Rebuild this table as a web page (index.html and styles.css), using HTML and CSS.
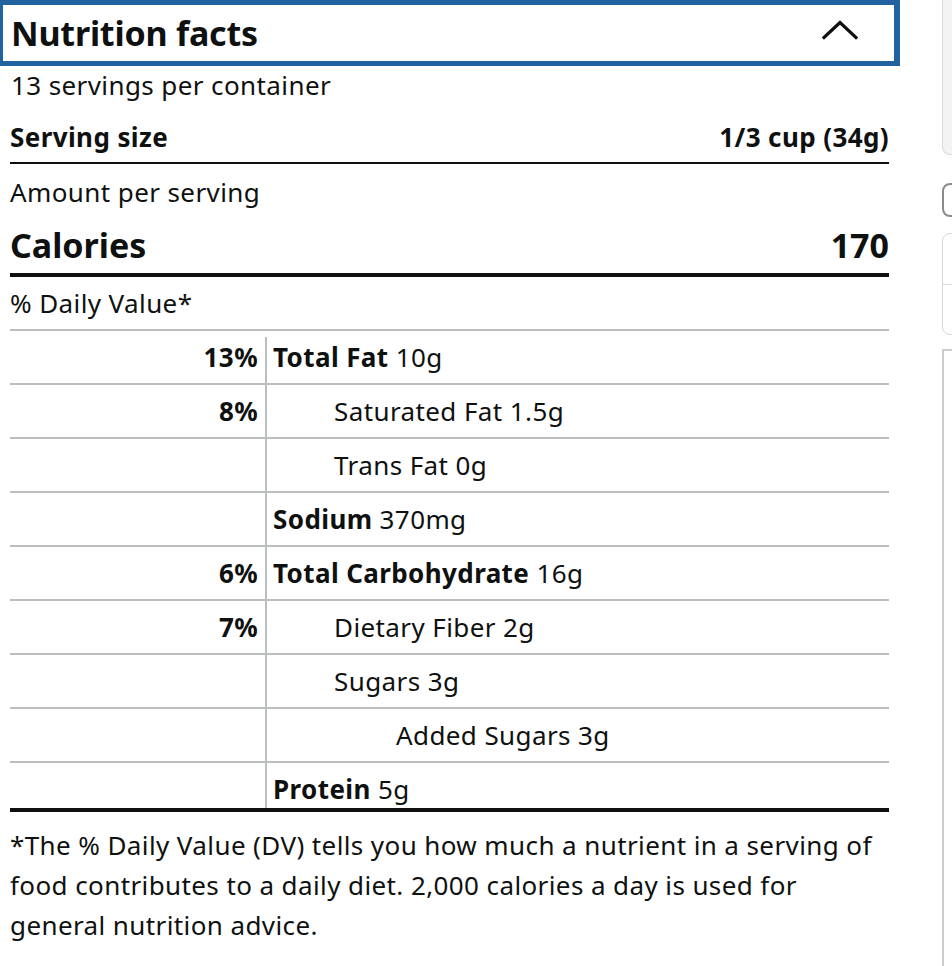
FILE: index.html
```html
<!DOCTYPE html>
<html lang="en">
<head>
<meta charset="utf-8">
<title>Nutrition facts</title>
<link rel="stylesheet" href="styles.css">
</head>
<body>
<div class="page">
  <main class="panel">
    <div class="head">
      <h2 class="title">Nutrition facts</h2>
      <svg class="chev" width="36" height="20" viewBox="0 0 36 20" aria-hidden="true">
        <path d="M2 17.5 L18 2.5 L34 17.5" fill="none" stroke="#0f1111" stroke-width="3.2" stroke-linecap="square" stroke-linejoin="miter"/>
      </svg>
    </div>
    <div class="content">
      <div class="servings">13 servings per container</div>
      <div class="split size"><span>Serving size</span><span>1/3 cup (34g)</span></div>
      <div class="amount">Amount per serving</div>
      <div class="split calories"><span>Calories</span><span>170</span></div>
      <div class="dv">% Daily Value*</div>
      <table class="nut">
        <tbody>
          <tr class="first"><td class="pct">13%</td><td class="name"><b>Total Fat</b> 10g</td></tr>
          <tr><td class="pct">8%</td><td class="name l1">Saturated Fat 1.5g</td></tr>
          <tr><td class="pct"></td><td class="name l1">Trans Fat 0g</td></tr>
          <tr><td class="pct"></td><td class="name"><b>Sodium</b> 370mg</td></tr>
          <tr><td class="pct">6%</td><td class="name"><b>Total Carbohydrate</b> 16g</td></tr>
          <tr><td class="pct">7%</td><td class="name l1">Dietary Fiber 2g</td></tr>
          <tr><td class="pct"></td><td class="name l1">Sugars 3g</td></tr>
          <tr><td class="pct"></td><td class="name l2">Added Sugars 3g</td></tr>
          <tr class="last"><td class="pct"></td><td class="name"><b>Protein</b> 5g</td></tr>
        </tbody>
      </table>
      <p class="note">*The % Daily Value (DV) tells you how much a nutrient in a serving of food contributes to a daily diet. 2,000 calories a day is used for general nutrition advice.</p>
    </div>
  </main>
  <aside class="side">
    <div class="card c1"></div>
    <div class="card c2"></div>
    <div class="card c3"><div class="c3-top"></div></div>
    <div class="card c4"></div>
  </aside>
</div>
</body>
</html>
```

FILE: styles.css
```css
* { box-sizing: border-box; }

html, body {
  margin: 0;
  padding: 0;
  background: #ffffff;
  overflow: hidden;
}

body {
  font-family: "Noto Sans", "Open Sans", "DejaVu Sans", sans-serif;
  color: #0f1111;
  font-size: 26px;
  letter-spacing: 0.4px;
}

.page {
  display: flex;
  width: 952px;
  height: 966px;
  overflow: hidden;
  gap: 42px;
}

.panel {
  width: 900px;
  flex: 0 0 900px;
}

.head {
  height: 66px;
  border-style: solid;
  border-color: #2162a1;
  border-width: 5px 6px 5px 3px;
  display: flex;
  align-items: center;
  justify-content: space-between;
  padding: 0 36px 0 8px;
}

.title {
  margin: 0;
  font-size: 34px;
  font-weight: 700;
  line-height: 40px;
  letter-spacing: -0.2px;
}

.chev { display: block; margin-top: -6px; }

.content {
  padding: 0 11px 0 10px;
}

.servings {
  line-height: 38px;
  padding-left: 1px;
}

.split {
  display: flex;
  justify-content: space-between;
  align-items: center;
}

.size {
  font-weight: 700;
  line-height: 36px;
  padding: 15px 0 7px;
  border-bottom: 2px solid #0f1111;
}

.amount {
  line-height: 36px;
  margin-top: 10px;
}

.calories {
  font-weight: 700;
  font-size: 34px;
  letter-spacing: 0;
  line-height: 44px;
  margin-top: 13px;
  padding-bottom: 6px;
  border-bottom: 4px solid #0f1111;
}

.dv {
  line-height: 36px;
  padding: 8px 0;
  border-bottom: 2px solid #bbbfbf;
}

.nut {
  width: 100%;
  border-collapse: collapse;
}

.nut td {
  padding: 0;
  line-height: 52px;
  border-bottom: 2px solid #bbbfbf;
  white-space: nowrap;
}

.nut .last td {
  line-height: 38px;
  padding-top: 7px;
  border-bottom: 4px solid #0f1111;
}

.pct {
  width: 255px;
  text-align: right;
  font-weight: 700;
  padding-right: 7px !important;
}

.name {
  padding-left: 8px !important;
  background-image: linear-gradient(#bbbfbf, #bbbfbf);
  background-repeat: no-repeat;
  background-position: left bottom;
  background-size: 2px 100%;
}

.nut .first .name { background-size: 2px calc(100% - 6px); }

.name.l1 { padding-left: 69px !important; }
.name.l2 { padding-left: 131px !important; }

.note {
  margin: 13px 0 0;
  line-height: 40px;
}

.side {
  flex: 0 0 300px;
  display: flex;
  flex-direction: column;
}

.card { background: #ffffff; flex-shrink: 0; }

.c1 {
  height: 155px;
  background: #f3f3f3;
  border: 1px solid #d5d9d9;
  border-top: 0;
  border-radius: 0 0 8px 8px;
}

.c2 {
  height: 34px;
  margin-top: 28px;
  border: 2px solid #888c8c;
  border-radius: 8px;
}

.c3 {
  height: 102px;
  margin-top: 16px;
  border: 1px solid #d5d9d9;
  border-radius: 8px;
}

.c3-top {
  height: 51px;
  border-bottom: 1px solid #d5d9d9;
}

.c4 {
  height: 700px;
  margin-top: 14px;
  border: 2px solid #cccccc;
}
```
